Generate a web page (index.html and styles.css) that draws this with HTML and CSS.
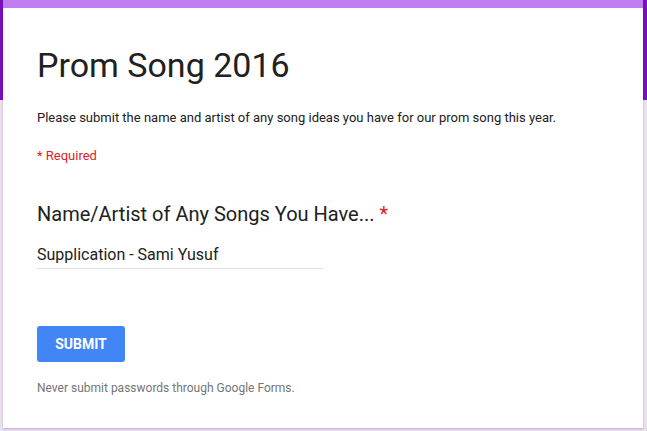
FILE: index.html
```html
<!DOCTYPE html>
<html>
<head>
<meta charset="utf-8">
<link rel="stylesheet" href="styles.css">
</head>
<body>
<div class="page">
  <div class="band"></div>
  <div class="card">
    <h1 class="title">Prom Song 2016</h1>
    <p class="desc">Please submit the name and artist of any song ideas you have for our prom song this year.</p>
    <p class="req">* Required</p>
    <div class="question">
      <div class="qtitle">Name/Artist of Any Songs You Have... <span class="star">*</span></div>
      <div class="answer">Supplication - Sami Yusuf</div>
    </div>
    <button class="submit">SUBMIT</button>
    <p class="footer">Never submit passwords through Google Forms.</p>
  </div>
</div>
</body>
</html>
```
FILE: styles.css
```css
html, body {
  margin: 0;
  padding: 0;
}
body {
  width: 647px;
  height: 431px;
  overflow: hidden;
  background: #e9e0f0;
  font-family: Roboto, "Liberation Sans", Arial, sans-serif;
}
.page {
  position: relative;
  padding: 0 4px 3px 3px;
}
.band {
  position: absolute;
  left: 0;
  top: 0;
  width: 647px;
  height: 100px;
  background: #7a0fc0;
}
.card {
  position: relative;
  background: #fff;
  border-top: 8px solid #c17ef2;
  height: 428px;
  box-sizing: border-box;
  padding: 0 0 0 34px;
  box-shadow: 0 1px 2px rgba(60, 0, 100, 0.25);
}
.title {
  margin: 0;
  padding-top: 37px;
  font-size: 34px;
  line-height: 40px;
  font-weight: 400;
  color: #212121;
}
.desc {
  margin: 24px 0 0;
  font-size: 13px;
  line-height: 18px;
  color: #212121;
}
.req {
  margin: 20px 0 0;
  font-size: 13px;
  line-height: 18px;
  color: #db1e2a;
}
.question {
  margin-top: 37px;
}
.qtitle {
  font-size: 20px;
  line-height: 24px;
  color: #212121;
}
.star {
  color: #db1e2a;
}
.answer {
  margin-top: 19px;
  width: 286px;
  font-size: 16px;
  line-height: 20px;
  padding-bottom: 3px;
  color: #212121;
  border-bottom: 1px solid #e0e0e0;
}
.submit {
  display: block;
  margin-top: 57px;
  width: 88px;
  height: 36px;
  border: 0;
  border-radius: 3px;
  background: #4285f4;
  color: #fff;
  font-family: Roboto, "Liberation Sans", Arial, sans-serif;
  font-weight: 700;
  font-size: 14px;
  padding: 0;
}
.footer {
  margin: 18px 0 0;
  font-size: 12px;
  line-height: 16px;
  color: #757575;
}
```
